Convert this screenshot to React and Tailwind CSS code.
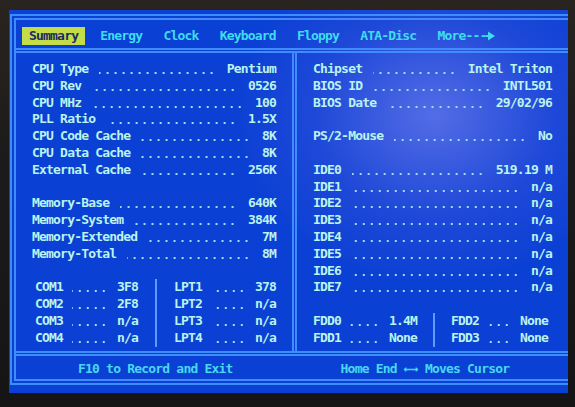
import React from "react";

// Dotted leader between a setup label and its value
const DOTS =
  "flex-1 self-stretch [background-image:radial-gradient(circle_at_4px_12px,#9edfe6_0.9px,transparent_1.5px)] [background-size:8px_100%] [background-repeat:repeat-x] [background-position:right_top]";

function Line({ label, value }) {
  return (
    <div className="flex h-[16.8px] items-center">
      <span className="whitespace-pre">{label}</span>
      <div className={`mx-[11px] ${DOTS}`} />
      <span className="whitespace-pre">{value}</span>
    </div>
  );
}

function ShortLine({ label, value }) {
  return (
    <div className="flex h-[16.8px] items-center">
      <span className="whitespace-pre">{label}</span>
      <div className={`mx-[9px] ${DOTS}`} />
      <span className="whitespace-pre">{value}</span>
    </div>
  );
}

const Blank = () => <div className="h-[16.8px]" />;

function HSep() {
  return <div className="h-[5px] border-y-2 border-[#3f8cff]" />;
}

function TabArrow() {
  return (
    <svg width="9" height="12" viewBox="0 0 9 12" className="ml-[-1px]">
      <rect x="0" y="5" width="3" height="2" fill="#3fdcf0" />
      <polygon points="2,1.5 9,6 2,10.5" fill="#3fdcf0" />
    </svg>
  );
}

export default function App() {
  return (
    <div className="h-[407px] w-[575px] overflow-hidden bg-[linear-gradient(180deg,#29241f,#1c1b1b_40%,#151516)] pl-[9px] pt-[10px] font-['DejaVu_Sans_Mono',monospace] text-[13px] font-bold leading-[16.8px] tracking-[-0.8px] text-[#baf3ef]">
      <div className="h-[383px] w-[559px] overflow-hidden bg-[#0b40d4] [background-image:radial-gradient(ellipse_200px_170px_at_425px_105px,rgba(185,170,255,0.42),rgba(130,115,235,0.16)_60%,transparent)] pl-[1px] pt-[4px]">
        <div className="w-[590px] border-[6px] border-double border-[#3f8cff]">
          {/* menu tabs */}
          <div className="flex h-[28px] items-start pl-[6px] pt-[7px] text-[#3fdcf0]">
            <div className="flex h-[18px] items-center bg-[#c3dc4a] px-[7px] text-[#1b2a5e]">Summary</div>
            <div className="ml-[15px] flex h-[18px] items-center whitespace-pre">
              {"Energy   Clock   Keyboard   Floppy   ATA-Disc   More---"}
              <TabArrow />
            </div>
          </div>
          <HSep />

          <div className="flex h-[298px]">
            {/* left column */}
            <div className="w-[276px] pl-[16px] pr-[16px] pt-[8px]">
              <Line label="CPU Type" value="Pentium" />
              <Line label="CPU Rev" value="0526" />
              <Line label="CPU MHz" value="100" />
              <Line label="PLL Ratio" value="1.5X" />
              <Line label="CPU Code Cache" value="8K" />
              <Line label="CPU Data Cache" value="8K" />
              <Line label="External Cache" value="256K" />
              <Blank />
              <Line label="Memory-Base" value="640K" />
              <Line label="Memory-System" value="384K" />
              <Line label="Memory-Extended" value="7M" />
              <Line label="Memory-Total" value="8M" />
              <Blank />
              <div className="flex">
                <div className="w-[106px] pl-[3px]">
                  <ShortLine label="COM1" value="3F8" />
                  <ShortLine label="COM2" value="2F8" />
                  <ShortLine label="COM3" value="n/a" />
                  <ShortLine label="COM4" value="n/a" />
                </div>
                <div className="ml-[17px] w-[2px] bg-[#5a9cff]" />
                <div className="ml-[17px] flex-1">
                  <ShortLine label="LPT1" value="378" />
                  <ShortLine label="LPT2" value="n/a" />
                  <ShortLine label="LPT3" value="n/a" />
                  <ShortLine label="LPT4" value="n/a" />
                </div>
              </div>
            </div>

            <div className="w-[5px] border-x-2 border-[#3f8cff]" />

            {/* right column */}
            <div className="w-[271px] pl-[16px] pr-[16px] pt-[8px]">
              <Line label="Chipset" value="Intel Triton" />
              <Line label="BIOS ID" value="INTL501" />
              <Line label="BIOS Date" value="29/02/96" />
              <Blank />
              <Line label="PS/2-Mouse" value="No" />
              <Blank />
              <Line label="IDE0" value="519.19 M" />
              <Line label="IDE1" value="n/a" />
              <Line label="IDE2" value="n/a" />
              <Line label="IDE3" value="n/a" />
              <Line label="IDE4" value="n/a" />
              <Line label="IDE5" value="n/a" />
              <Line label="IDE6" value="n/a" />
              <Line label="IDE7" value="n/a" />
              <Blank />
              <div className="flex">
                <div className="w-[104px]">
                  <ShortLine label="FDD0" value="1.4M" />
                  <ShortLine label="FDD1" value="None" />
                </div>
                <div className="ml-[16px] w-[2px] bg-[#5a9cff]" />
                <div className="ml-[16px] flex-1 pr-[4px]">
                  <ShortLine label="FDD2" value="None" />
                  <ShortLine label="FDD3" value="None" />
                </div>
              </div>
            </div>
          </div>
          <HSep />

          {/* key help */}
          <div className="flex h-[23px] items-center pl-[62px] pt-[3px] text-[#46d8f2]">
            <span className="whitespace-pre">F10 to Record and Exit</span>
            <span className="ml-[108px] whitespace-pre">Home End ←→ Moves Cursor</span>
          </div>
        </div>
      </div>
    </div>
  );
}
